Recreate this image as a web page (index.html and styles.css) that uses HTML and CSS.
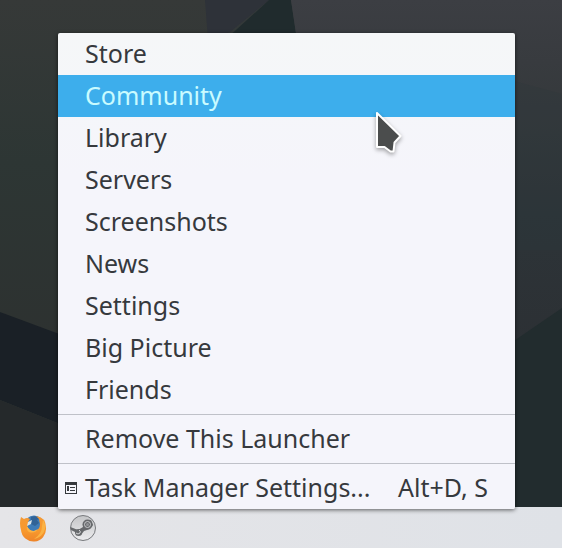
FILE: index.html
```html
<!DOCTYPE html>
<html lang="en">
<head>
<meta charset="utf-8">
<meta name="viewport" content="width=device-width, initial-scale=1">
<title>Desktop</title>
<link rel="stylesheet" href="styles.css">
</head>
<body>
<div class="desktop">
  <svg class="wallpaper" viewBox="0 0 562 507" preserveAspectRatio="none" aria-hidden="true">
    <defs>
      <linearGradient id="base" x1="0" y1="0" x2="1" y2="0">
        <stop offset="0" stop-color="#303735"/>
        <stop offset="1" stop-color="#393c3f"/>
      </linearGradient>
      <linearGradient id="left" x1="0" y1="0" x2="0" y2="1">
        <stop offset="0" stop-color="#363938"/>
        <stop offset=".45" stop-color="#2d3634"/>
        <stop offset="1" stop-color="#2d3130"/>
      </linearGradient>
      <linearGradient id="right" x1="0" y1="0" x2="0" y2="1">
        <stop offset="0" stop-color="#3c3e43"/>
        <stop offset=".3" stop-color="#35393c"/>
        <stop offset=".6" stop-color="#2d3438"/>
        <stop offset="1" stop-color="#2c3034"/>
      </linearGradient>
    </defs>
    <rect width="562" height="507" fill="url(#base)"/>
    <path d="M0 0H205L210 40H100V360L0 312Z" fill="url(#left)"/>
    <path d="M205 0H269L230 32L208 40Z" fill="#2e3239"/>
    <path d="M269 0H291L297 40H225Z" fill="#202b2d"/>
    <path d="M291 0H562V310L500 355V40H297Z" fill="url(#right)"/>
    <path d="M510 80L562 94V250H510Z" fill="#2d373a" opacity=".25"/>
    <path d="M0 312L70 338V428L0 400Z" fill="#1a2026"/>
    <path d="M0 400L70 428V507H0Z" fill="#25292b"/>
    <path d="M505 347L562 308V507H505Z" fill="#222c2e"/>
  </svg>

  <ul class="menu" role="menu">
    <li role="none"><button class="item" type="button" role="menuitem"><span class="icon"></span>Store</button></li>
    <li role="none"><button class="item item-active" type="button" role="menuitem"><span class="icon"></span>Community</button></li>
    <li role="none"><button class="item" type="button" role="menuitem"><span class="icon"></span>Library</button></li>
    <li role="none"><button class="item" type="button" role="menuitem"><span class="icon"></span>Servers</button></li>
    <li role="none"><button class="item" type="button" role="menuitem"><span class="icon"></span>Screenshots</button></li>
    <li role="none"><button class="item" type="button" role="menuitem"><span class="icon"></span>News</button></li>
    <li role="none"><button class="item" type="button" role="menuitem"><span class="icon"></span>Settings</button></li>
    <li role="none"><button class="item" type="button" role="menuitem"><span class="icon"></span>Big Picture</button></li>
    <li role="none"><button class="item" type="button" role="menuitem"><span class="icon"></span>Friends</button></li>
    <li class="separator" role="separator"></li>
    <li role="none"><button class="item" type="button" role="menuitem"><span class="icon"></span>Remove This Launcher</button></li>
    <li class="separator" role="separator"></li>
    <li role="none">
      <button class="item" type="button" role="menuitem">
        <span class="icon">
          <svg width="12" height="12" viewBox="0 0 12 12" aria-hidden="true">
            <path d="M0 0H12V12H0ZM1 3V11H11V3Z" fill="#36393d" fill-rule="evenodd"/>
            <path d="M2 4H4V9H2ZM5 5H10V6H5ZM5 8H10V9H5Z" fill="#36393d"/>
          </svg>
        </span>
        <span>Task Manager Settings...</span>
        <span class="shortcut">Alt+D, S</span>
      </button>
    </li>
  </ul>

  <svg class="cursor" width="36" height="52" viewBox="0 0 36 52" aria-hidden="true">
    <path d="M7 7V41H14.500L20.500 45.500H23.500L24.500 36.500L30.500 30Z" fill="#4b4d4d" stroke="#fff" stroke-width="2" stroke-linejoin="round"/>
  </svg>
</div>

<nav class="taskbar" aria-label="Task manager">
  <button class="launcher" type="button" aria-label="Firefox">
    <svg width="28" height="28" viewBox="0 0 28 28" aria-hidden="true">
      <defs>
        <linearGradient id="fox" x1="0" y1="0" x2="0" y2="1">
          <stop offset="0" stop-color="#f59a35"/>
          <stop offset=".6" stop-color="#f7982d"/>
          <stop offset="1" stop-color="#ee8429"/>
        </linearGradient>
      </defs>
      <circle cx="15" cy="11" r="9.500" fill="#3e7cb8"/>
      <path d="M12 3Q17 1 21 4L18 6L20 9L16 12L12 10Z" fill="#316397"/>
      <path d="M2 3L5 5Q8 3 11 5L9 8L12 9L8 12Q10 17 15 17Q21 16 21 10L20 5Q18 3 17 2Q27 3 27 14A12.500 12.500 0 0 1 2 16Q0 9 2 3Z" fill="url(#fox)"/>
      <path d="M24 6Q27 10 26 15Q24 23 15 25Q23 20 23 12Z" fill="#fbb243"/>
      <path d="M9 8L13 6L12 10L8 12Z" fill="#dce5e8"/>
      <path d="M8 12Q10 17 15 17L19 15Q16 20 10 18Q7 16 8 12Z" fill="#fbb243"/>
    </svg>
  </button>
  <button class="launcher" type="button" aria-label="Steam">
    <svg width="28" height="28" viewBox="0 0 28 28" aria-hidden="true">
      <defs>
        <linearGradient id="disc" x1="0" y1="0" x2="0" y2="1">
          <stop offset="0" stop-color="#c4c5c7"/>
          <stop offset="1" stop-color="#ececee"/>
        </linearGradient>
      </defs>
      <circle cx="14" cy="14" r="12.500" fill="url(#disc)" stroke="#77797c"/>
      <path d="M1.500 13L9 16L14 13L16 8L22 6L24 11L21 15L15 17L12 21L8 21L6 18L2 16Z" fill="#67696c"/>
      <circle cx="18.500" cy="10.500" r="5" fill="#67696c"/>
      <circle cx="18.500" cy="10.500" r="3" fill="none" stroke="#c9cacc"/>
      <circle cx="18.500" cy="10.500" r="1.500" fill="#929497"/>
      <circle cx="9.500" cy="18.500" r="3.500" fill="#67696c"/>
      <path d="M7 19Q9 21 11 19Q12 17 10 16" fill="none" stroke="#d2d3d5"/>
    </svg>
  </button>
</nav>
</body>
</html>
```
FILE: styles.css
```css
* {
  box-sizing: border-box;
}

body {
  margin: 0;
  min-height: 100vh;
  display: flex;
  flex-direction: column;
  background: #2d3334;
  font-family: "Noto Sans", "Open Sans", sans-serif;
}

.desktop {
  position: relative;
  flex: 1;
  min-height: 507px;
}

.wallpaper {
  position: absolute;
  inset: 0;
  width: 100%;
  height: 100%;
}

.menu {
  position: absolute;
  left: 58px;
  right: 47px;
  bottom: -2px;
  margin: 0;
  padding: 0;
  list-style: none;
  border-radius: 2px;
  background: linear-gradient(#f5f7f8, #f5f5fb 30%);
  box-shadow: 0 1px 4px rgba(0, 0, 0, 0.6);
}

.item {
  display: flex;
  align-items: center;
  width: 100%;
  height: 42px;
  margin: 0;
  padding: 0 27px 2px 7px;
  border: 0;
  background: none;
  color: #36393d;
  font: inherit;
  font-size: 25px;
  line-height: 40px;
  text-align: left;
  white-space: nowrap;
}

.item-active {
  background: #3daeec;
  color: #c9fbff;
}

.icon {
  display: flex;
  flex: none;
  width: 20px;
  padding-top: 2px;
}

.shortcut {
  margin-left: auto;
}

.separator {
  height: 7px;
  padding-top: 3px;
}

.separator::before {
  content: "";
  display: block;
  height: 1px;
  background: #bfc1c8;
}

.cursor {
  position: absolute;
  left: 370px;
  top: 106px;
  filter: drop-shadow(0 2px 2px rgba(0, 0, 0, 0.35));
}

.taskbar {
  display: flex;
  align-items: center;
  gap: 22px;
  height: 41px;
  padding: 0 19px;
  background: linear-gradient(90deg, #e5e5e8, #dfe2e7);
}

.launcher {
  display: flex;
  padding: 0;
  border: 0;
  background: none;
}
```
